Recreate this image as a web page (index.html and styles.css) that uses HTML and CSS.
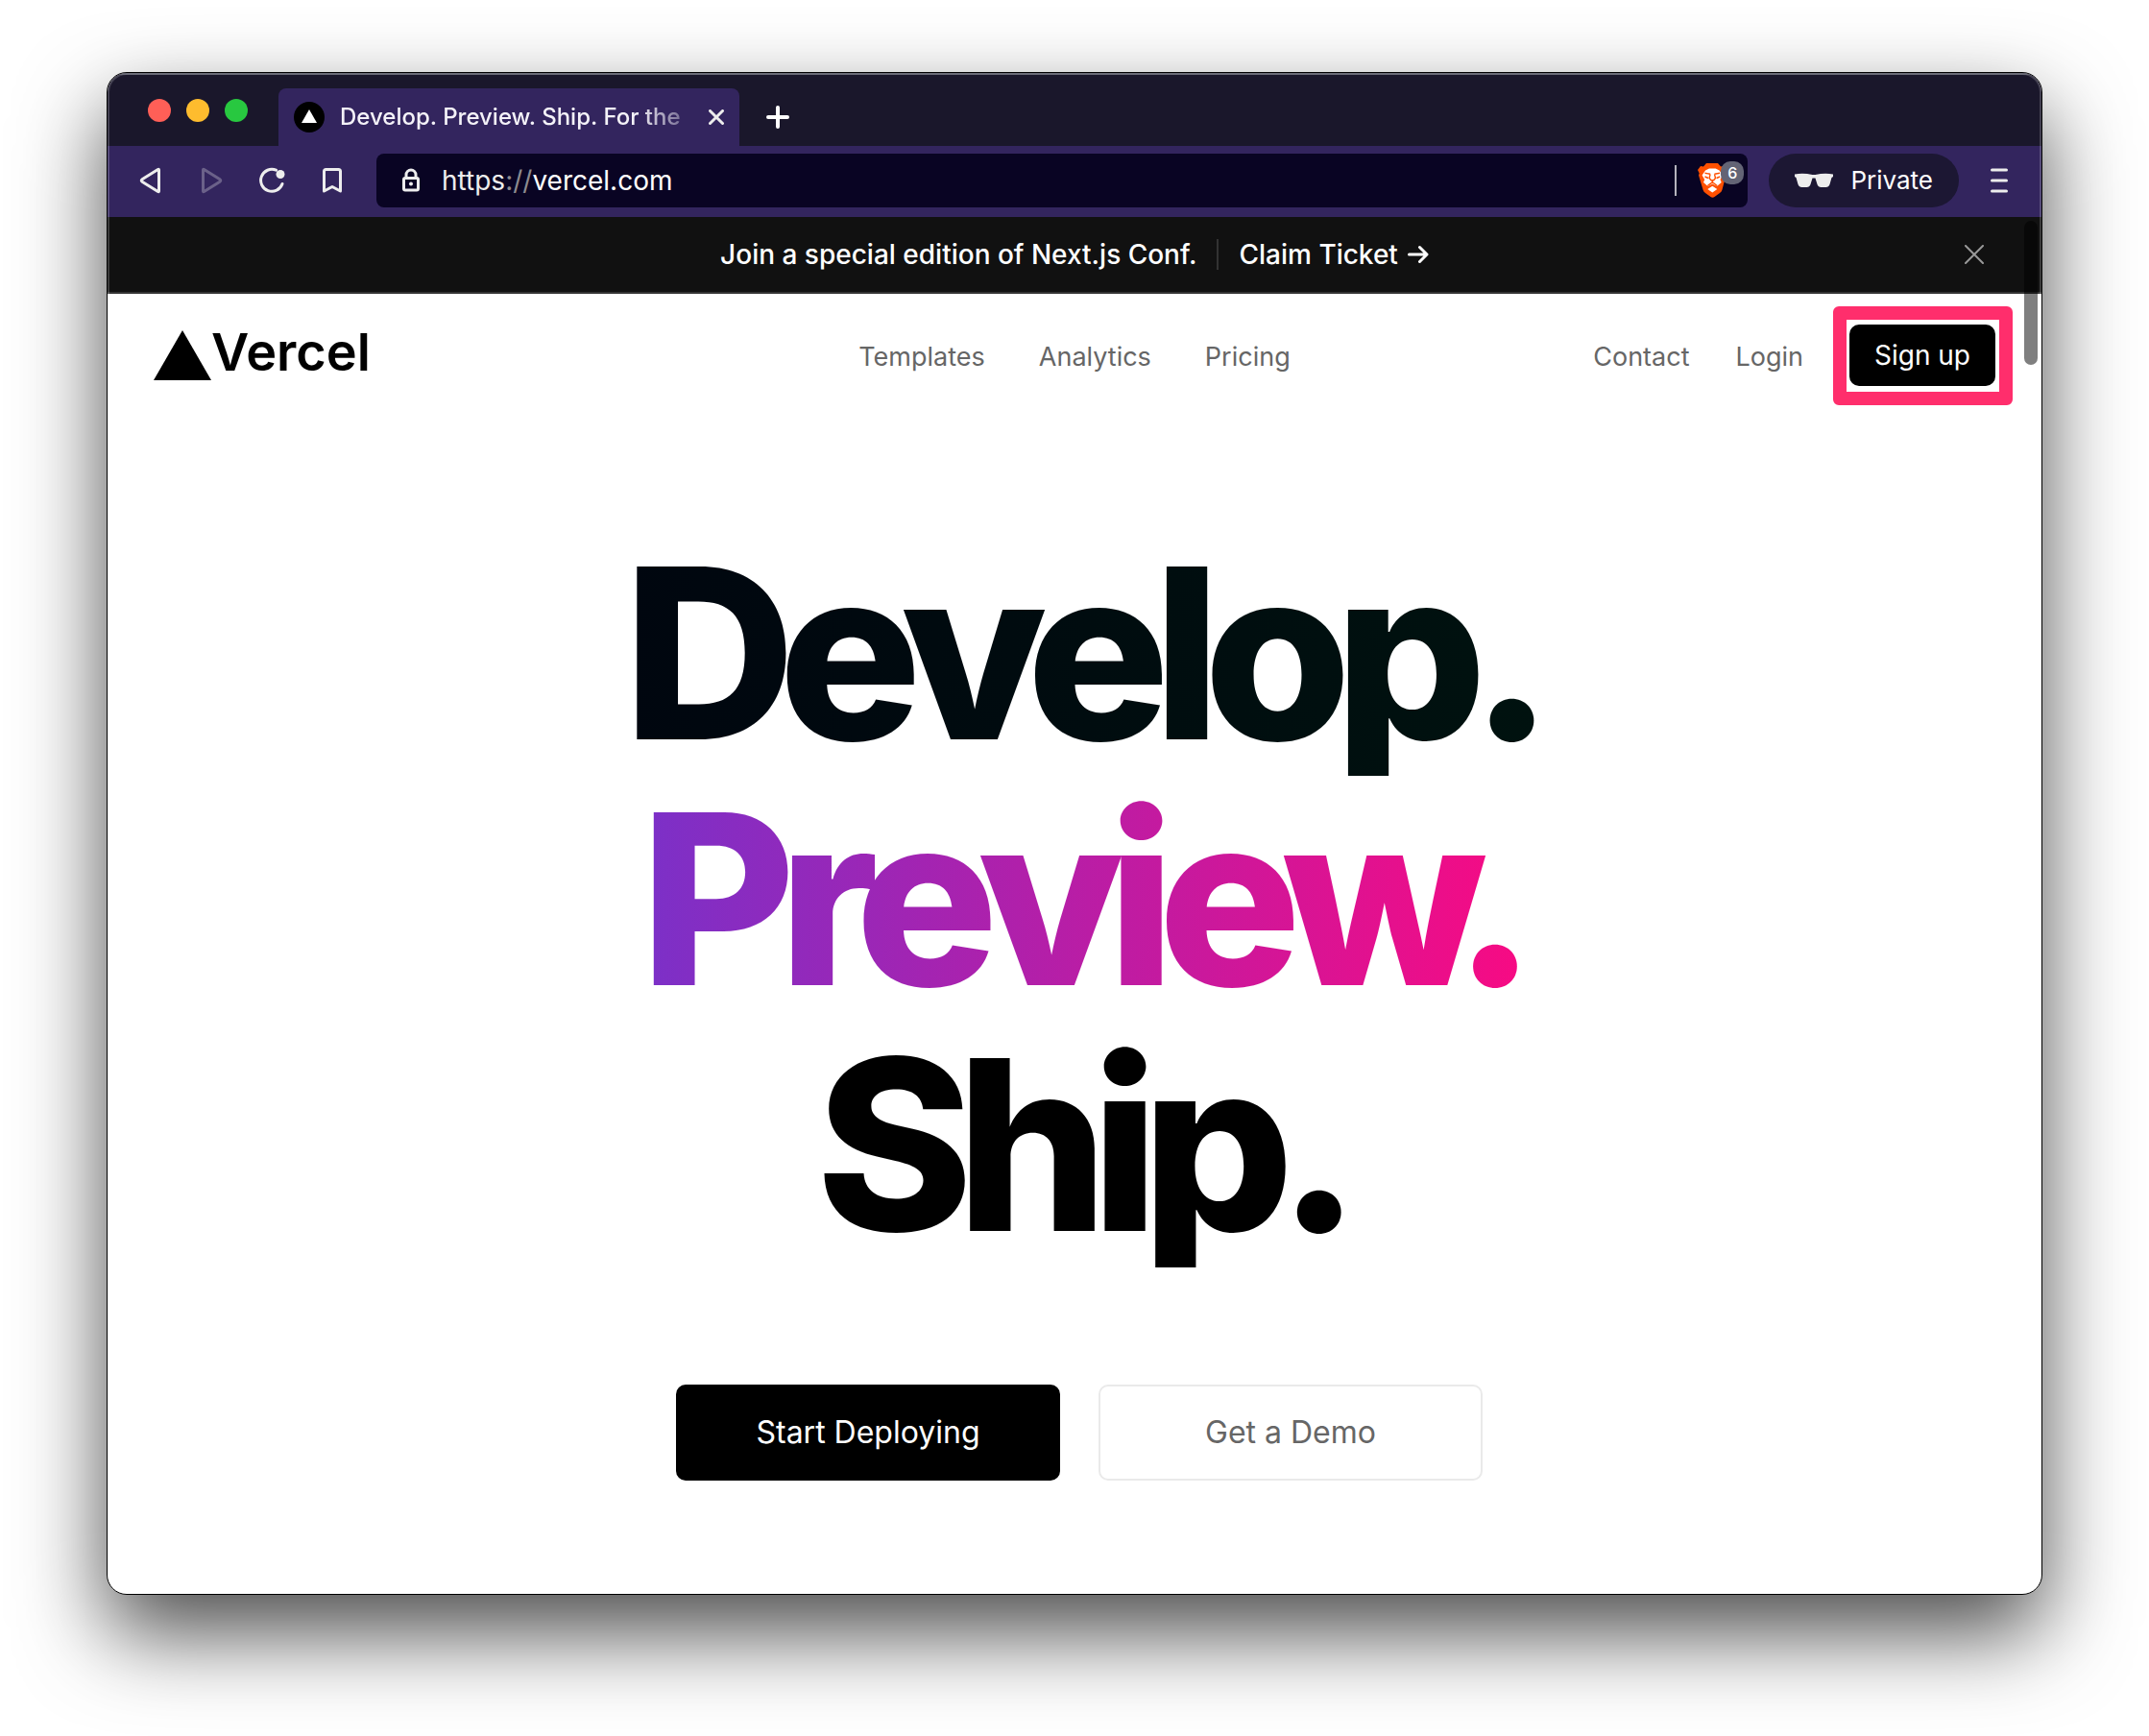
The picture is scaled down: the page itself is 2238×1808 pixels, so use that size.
FILE: index.html
```html
<!DOCTYPE html>
<html lang="en">
<head>
<meta charset="utf-8">
<title>Develop. Preview. Ship. For the best frontend teams</title>
<link rel="stylesheet" href="styles.css">
</head>
<body>
<div class="window">
  <header class="tabstrip">
    <div class="lights">
      <button class="light light-close" aria-label="Close window"></button>
      <button class="light light-min" aria-label="Minimize window"></button>
      <button class="light light-max" aria-label="Zoom window"></button>
    </div>
    <div class="tab">
      <svg class="favicon" viewBox="0 0 32 32"><circle cx="16" cy="16" r="16"/><path d="M16 8l8 14H8z" fill="#fff"/></svg>
      <span class="tab-title">Develop. Preview. Ship. For the</span>
      <button class="icon-btn" aria-label="Close tab">
        <svg width="16" height="16" viewBox="0 0 16 16"><path d="M1.5 1.5l13 13M14.5 1.5l-13 13" class="line3"/></svg>
      </button>
    </div>
    <button class="icon-btn new-tab" aria-label="New tab">
      <svg width="24" height="24" viewBox="0 0 24 24"><path d="M12 2v20M2 12h20" class="line4"/></svg>
    </button>
  </header>

  <div class="toolbar">
    <div class="tools">
      <button class="icon-btn" aria-label="Back"><svg width="28" height="28" viewBox="0 0 28 28"><path d="M22.5 3v22q0 1-1 .5L5 15.2q-1.500-1.200 0-2.400L21.500 2.500q1-.5 1 .5z" class="line3"/></svg></button>
      <button class="icon-btn dim" aria-label="Forward"><svg width="28" height="28" viewBox="0 0 28 28"><path d="M5.500 3v22q0 1 1 .5L23 15.200q1.500-1.200 0-2.400L6.500 2.500q-1-.5-1 .5z" class="line3"/></svg></button>
      <button class="icon-btn" aria-label="Reload"><svg width="28" height="28" viewBox="0 0 28 28"><path d="M18.500 3.200A11.500 11.500 0 1 0 25 17.500" class="line3"/><circle cx="23" cy="7.500" r="4.500" fill="#ededed"/></svg></button>
      <button class="icon-btn" aria-label="Bookmark"><svg width="28" height="28" viewBox="0 0 28 28"><path d="M5.500 25V4.500q0-2 2-2h13q2 0 2 2V25L14 20.500z" class="line3"/></svg></button>
    </div>
    <div class="address">
      <svg width="20" height="26" viewBox="0 0 20 26"><rect x="2.500" y="10.500" width="15" height="12.500" rx="1.500" class="line3"/><path d="M5 10V7a5 5 0 0 1 10 0v3" class="line3"/><circle cx="10" cy="16.500" r="2" fill="#ededed"/></svg>
      <a class="url" href="https://vercel.com">https<span class="slashes">://</span><span class="host">vercel.com</span></a>
      <span class="address-rule"></span>
      <button class="icon-btn shield" aria-label="Brave Shields">
        <svg width="30" height="36" viewBox="0 0 30 36">
          <path d="M9 0h12l3 3.500 3-.5 3 4-1 3.500.5 2-4 15q-.5 2-2.500 3.500l-5.500 4q-2 1.500-4 0l-5.500-4Q6 29.500 5.500 27.500L1 12.500l.7-2L0 7l3-4 3 .5z" fill="#ff5000"/>
          <path d="M8 7.500L12 5.500h6.600l4 2 3.400 5-2.500 4.500 1.200 3-4.700 4-4.700-2.500L10.600 24 6 20l1.200-3L4.600 12.500z" fill="#fff"/>
          <path d="M7.500 10.300l5.600 1M23.100 10.300l-5.600 1M13.100 11.300l-1 4.200 1.900 2.300h2.600l1.900-2.300-1-4.200M15.300 18v1.800l-5 3.700M15.300 19.800l5 3.700M7.500 14l3.500 1.500M23.100 14l-3.500 1.500" fill="none" stroke="#ff5000" stroke-width="1.400"/>
          <path d="M15.300 23.700l5 3.300-5 3.500-5-3.500z" fill="#fff"/>
        </svg>
        <span class="count">6</span>
      </button>
    </div>
    <button class="private">
      <svg width="40" height="16" viewBox="0 0 40 16"><path d="M0 1.500Q9 0 18.500 2h3Q31 0 40 1.500V4l-1.500 1-2 7q-1 3-4 3h-5q-3 0-4-3l-2-6.500h-3l-2 6.500q-1 3-4 3h-5q-3 0-4-3l-2-7L0 4z" fill="#ededed"/></svg>
      Private
    </button>
    <button class="icon-btn" aria-label="Menu"><svg width="18" height="26" viewBox="0 0 18 26"><path d="M1.500 2h15M1.500 13h15M1.500 24h15" class="line3"/></svg></button>
  </div>

  <main class="page">
    <div class="banner">
      <span class="banner-text">Join a special edition of Next.js Conf.</span>
      <a class="claim" href="#">Claim Ticket
        <svg width="22" height="20" viewBox="0 0 22 20"><path d="M1.500 10h18M12.500 2.500l7.500 7.500-7.500 7.500" class="arrow"/></svg>
      </a>
      <button class="icon-btn dismiss" aria-label="Dismiss"><svg width="20" height="20" viewBox="0 0 20 20"><path d="M1 1l18 18M19 1L1 19" class="thin"/></svg></button>
    </div>

    <nav class="nav">
      <a class="brand" href="#">
        <svg width="60" height="52" viewBox="0 0 60 52"><path d="M30 0l30 52H0z"/></svg>
        <span class="brand-name">Vercel</span>
      </a>
      <div class="links">
        <a class="nav-link" href="#">Templates</a>
        <a class="nav-link" href="#">Analytics</a>
        <a class="nav-link" href="#">Pricing</a>
      </div>
      <div class="account">
        <a class="nav-link" href="#">Contact</a>
        <a class="nav-link" href="#">Login</a>
        <button class="signup">Sign up</button>
      </div>
    </nav>

    <section class="hero">
      <h1>
        <span class="word develop">Develop.</span>
        <span class="word preview">Preview.</span>
        <span class="word ship">Ship.</span>
      </h1>
      <div class="actions">
        <button class="btn btn-dark">Start Deploying</button>
        <button class="btn btn-light">Get a Demo</button>
      </div>
    </section>
    <span class="scroll-thumb"></span>
  </main>
</div>
</body>
</html>
```

FILE: styles.css
```css
* { box-sizing: border-box; }

body {
  min-height: 100vh;
  margin: 0;
  padding: 75px 111px 147px;
  background: #fff;
  font-family: Inter, "Liberation Sans", sans-serif;
  font-size: 28px;
  line-height: 40px;
  color: #000;
}

a { color: inherit; text-decoration: none; }
button { font: inherit; color: inherit; border: 0; padding: 0; background: none; cursor: pointer; }
svg { display: block; flex: none; }

.line3 { fill: none; stroke: #ededed; stroke-width: 3; stroke-linecap: round; stroke-linejoin: round; }
.line4 { fill: none; stroke: #fff; stroke-width: 4; stroke-linecap: round; }
.thin { fill: none; stroke: #999; stroke-width: 2; stroke-linecap: round; }
.arrow { fill: none; stroke: #fff; stroke-width: 3; stroke-linecap: round; stroke-linejoin: round; }

.icon-btn { display: flex; flex: none; align-items: center; justify-content: center; }
.dim { opacity: .3; }

.window {
  position: relative;
  overflow: hidden;
  border: 1px solid #000;
  border-radius: 21px;
  background: #fff;
  box-shadow: 0 40px 90px rgba(0, 0, 0, .7);
}
/* light rim along the inside edge */
.window::after {
  content: "";
  position: absolute;
  inset: 0;
  border: 2px solid rgba(255, 255, 255, .18);
  border-radius: 20px;
  pointer-events: none;
}

/* tab strip */
.tabstrip {
  display: flex;
  align-items: flex-end;
  height: 76px;
  padding-left: 42px;
  background: #1a172b;
  box-shadow: inset 0 2px #4a4b5a;
}
.lights { display: flex; gap: 16px; margin-right: 32px; padding-bottom: 25px; }
.light { width: 24px; height: 24px; border-radius: 50%; }
.light-close { background: #ff5f57; }
.light-min { background: #febc2e; }
.light-max { background: #28c840; }
.tab {
  display: flex;
  align-items: center;
  width: 480px;
  height: 60px;
  padding: 0 16px;
  border-radius: 8px 8px 0 0;
  background: #33255e;
}
.favicon { width: 32px; height: 32px; margin-right: 16px; }
.tab-title {
  flex: 1;
  overflow: hidden;
  white-space: nowrap;
  margin-right: 24px;
  font-size: 24px;
  font-weight: 500;
  color: #f4f2f8;
  -webkit-mask-image: linear-gradient(90deg, #000 86%, rgba(0, 0, 0, .3));
  mask-image: linear-gradient(90deg, #000 86%, rgba(0, 0, 0, .3));
}
.new-tab { height: 60px; margin-left: 28px; }

/* toolbar */
.toolbar {
  display: flex;
  align-items: center;
  height: 74px;
  padding: 0 35px 2px 31px;
  background: #33255e;
}
.tools { display: flex; gap: 35px; margin-right: 32px; }
.address {
  display: flex;
  flex: 1;
  align-items: center;
  height: 56px;
  margin-right: 22px;
  padding: 0 4px 0 26px;
  border-radius: 8px;
  background: #090423;
}
.url { flex: 1; margin-left: 22px; color: #ededed; }
.slashes { color: #8d8b8f; }
.host { color: #fff; }
.address-rule { width: 2px; height: 32px; margin-right: 22px; background: #b5b4bd; }
.shield { position: relative; width: 48px; justify-content: flex-start; }
.count {
  position: absolute;
  top: -2px;
  right: 0;
  width: 24px;
  height: 24px;
  border-radius: 10px;
  background: #636475;
  color: #fff;
  font-size: 16px;
  font-weight: 500;
  line-height: 24px;
}
.private {
  display: flex;
  align-items: center;
  gap: 18px;
  height: 56px;
  margin-right: 33px;
  padding: 0 27px;
  border-radius: 28px;
  background: #1c1733;
  color: #fff;
  font-size: 26px;
}

/* banner */
.page { position: relative; }
.banner {
  position: relative;
  display: flex;
  align-items: center;
  justify-content: center;
  height: 80px;
  border-bottom: 2px solid #333;
  background: #111;
  color: #fff;
  font-weight: 500;
}
.banner-text { margin-right: 20px; }
.claim {
  display: flex;
  align-items: center;
  gap: 10px;
  height: 32px;
  padding-left: 22px;
  border-left: 2px solid #333;
}
.dismiss { position: absolute; right: 60px; }

/* site nav */
.nav {
  display: grid;
  grid-template-columns: 1fr auto 1fr;
  align-items: center;
  height: 128px;
  padding: 0 48px;
  color: #666;
}
.nav-link { padding-top: 4px; font-size: 27px; }
.brand { display: flex; align-items: center; color: #000; }
.brand-name { padding-bottom: 6px; font-size: 54px; font-weight: 600; }
.links { display: flex; gap: 56px; }
.account { display: flex; align-items: center; justify-content: flex-end; }
.account .nav-link { margin-right: 48px; }
.signup {
  position: relative;
  width: 152px;
  height: 64px;
  border-radius: 10px;
  background: #000;
  color: #fff;
}
.signup::after {
  content: "";
  position: absolute;
  inset: -19px -18px -20px -17px;
  border: 14px solid #ff2e6c;
  border-radius: 6px;
}

/* hero */
.hero { padding: 118px 0 118px 10px; }
h1 {
  margin: 0 0 122px;
  padding-left: 18px;
  font-size: 248px;
  font-weight: 800;
  line-height: 256px;
  letter-spacing: -0.07em;
}
.word {
  display: block;
  width: fit-content;
  margin: 0 auto;
  padding-right: 16px;
  -webkit-background-clip: text;
  background-clip: text;
  color: transparent;
}
.develop { background-image: linear-gradient(90deg, #00060f, #00120f); }
.preview { background-image: linear-gradient(90deg, #7b30c8, #f90a82); }
.ship { background-image: linear-gradient(90deg, #000, #000); }
.actions { display: flex; justify-content: center; gap: 40px; }
.btn { width: 400px; height: 100px; border-radius: 10px; font-size: 32px; }
.btn-dark { background: #000; color: #fff; }
.btn-light { border: 2px solid #eaeaea; background: #fff; color: #666; }

.scroll-thumb {
  position: absolute;
  top: 4px;
  right: 4px;
  width: 14px;
  height: 150px;
  border-radius: 7px;
  background: rgba(0, 0, 0, .5);
}
```
